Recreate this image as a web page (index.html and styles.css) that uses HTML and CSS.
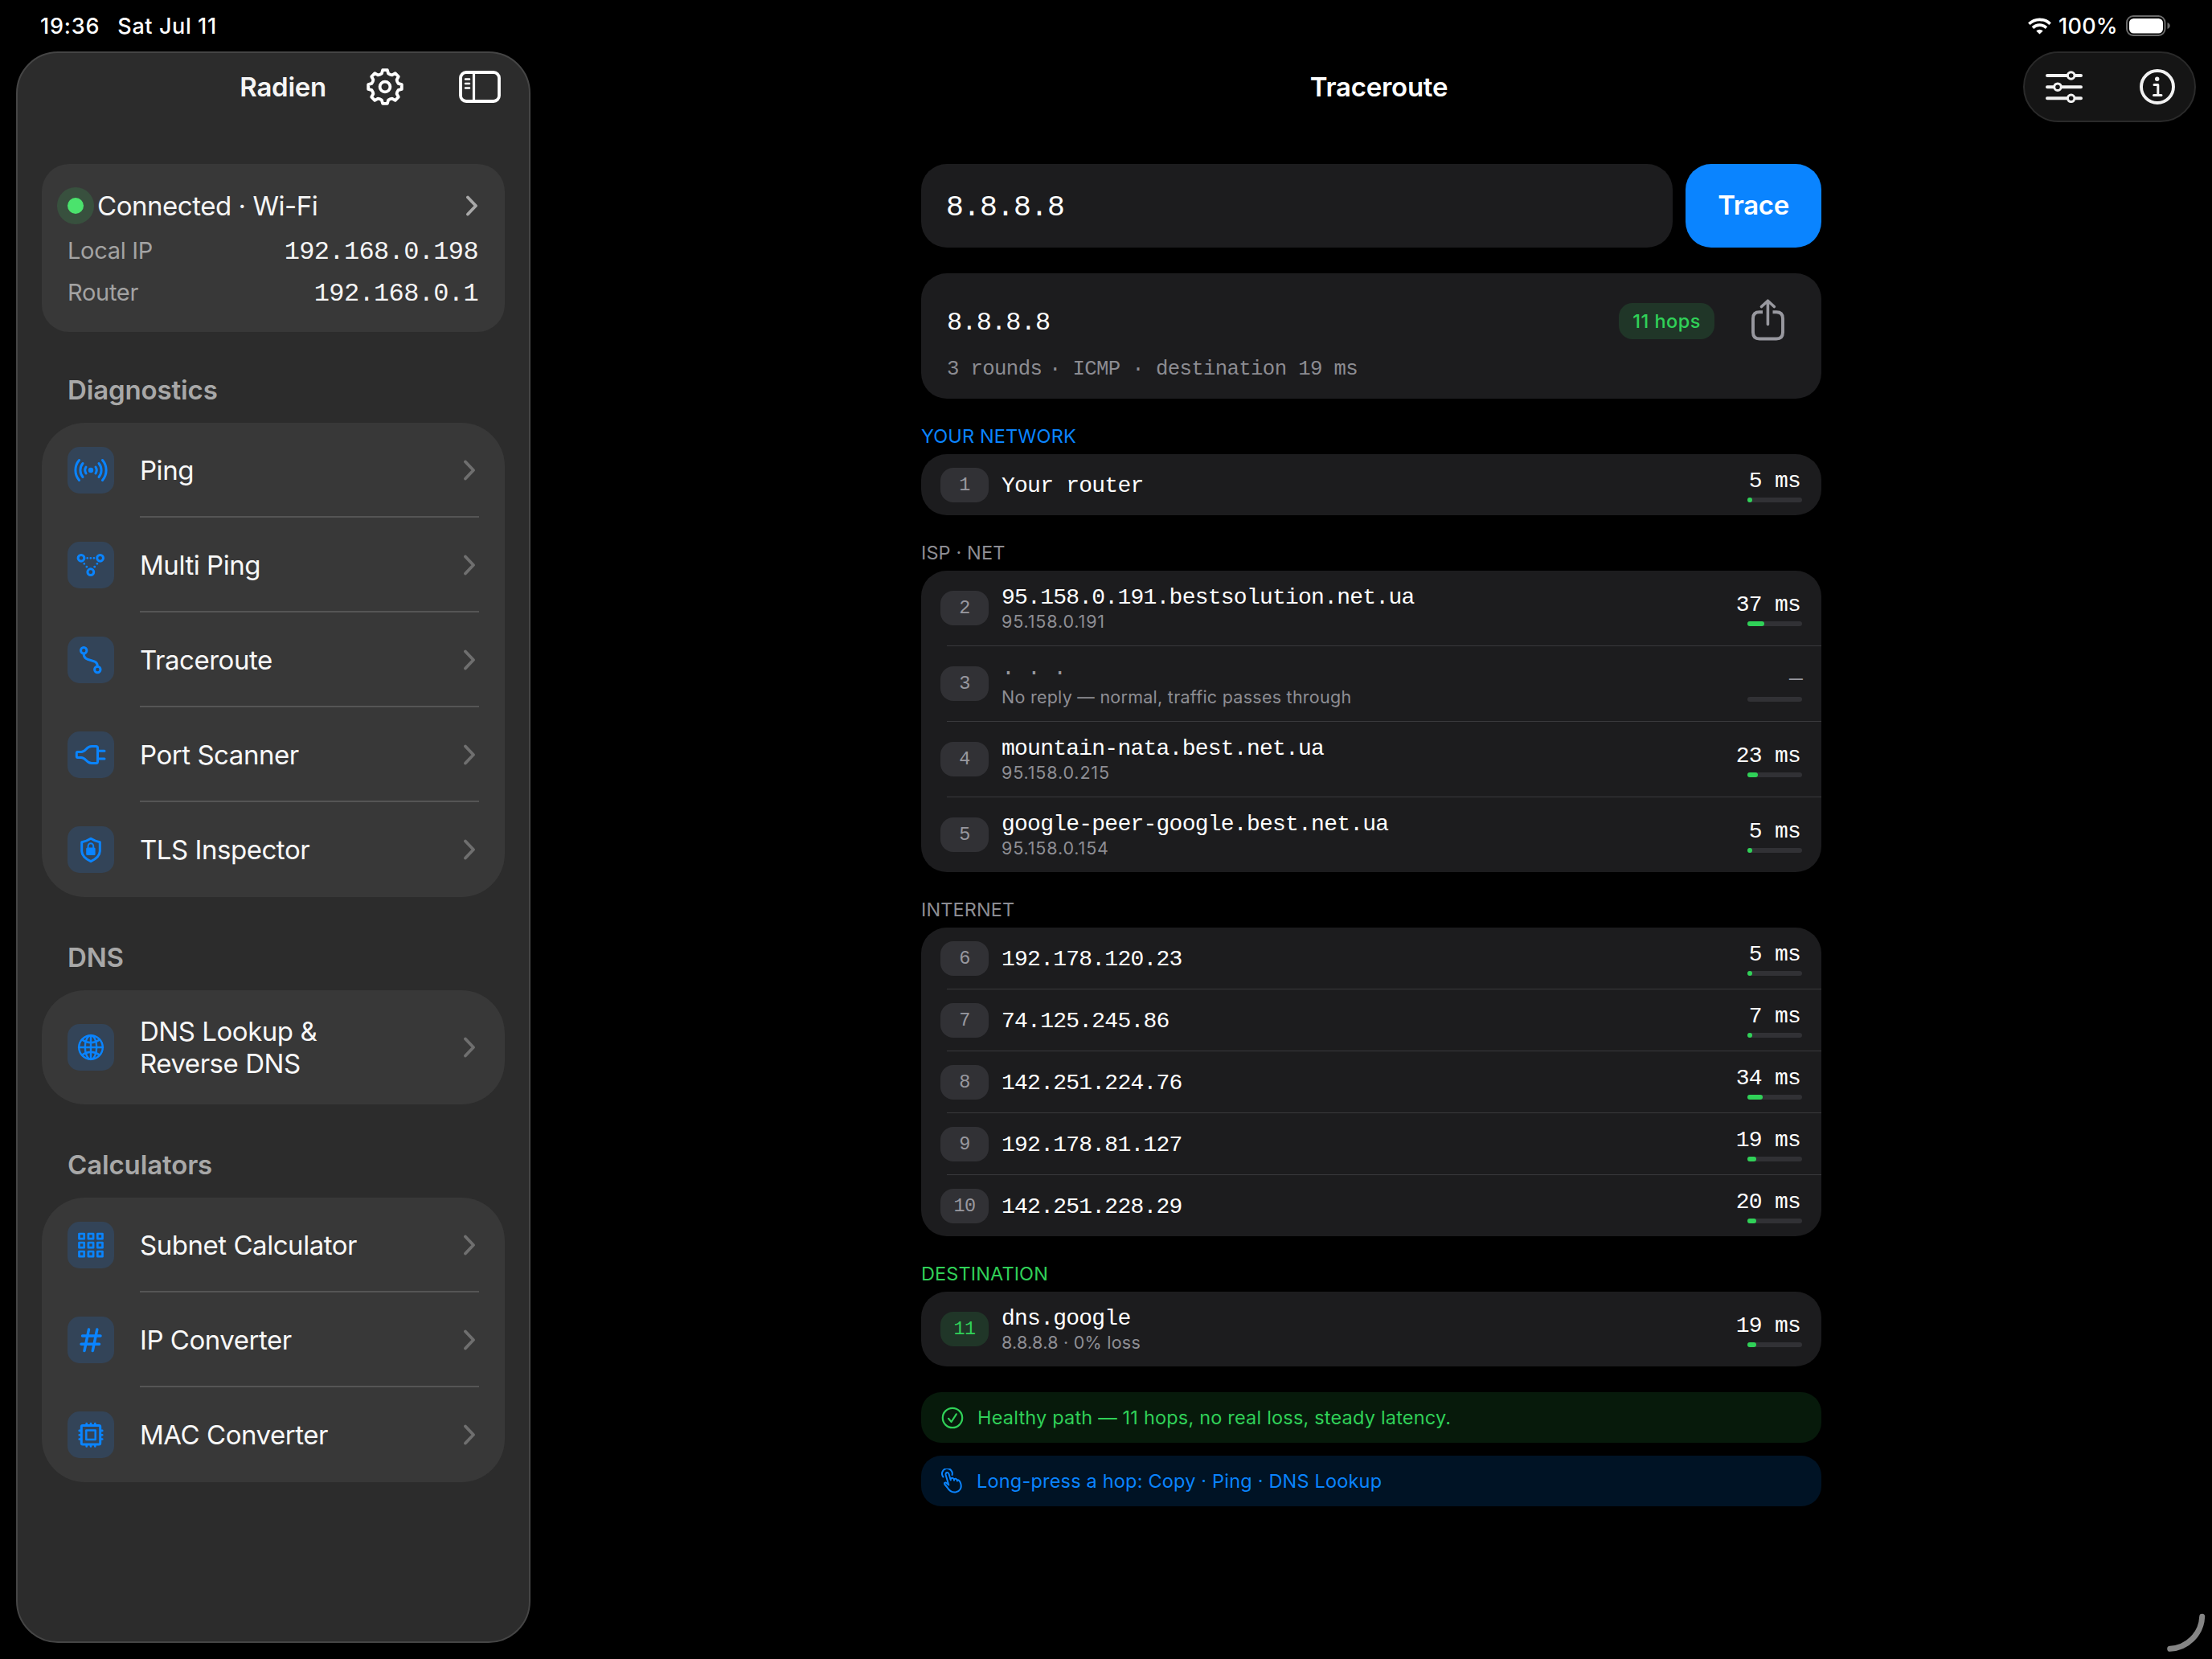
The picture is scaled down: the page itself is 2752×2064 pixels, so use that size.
FILE: index.html
```html
<!DOCTYPE html>
<html lang="en">

<head>
  <meta charset="UTF-8">
  <meta name="viewport" content="width=device-width, initial-scale=1.0">
  <title>Radien - Traceroute</title>
  <link rel="stylesheet" href="styles.css">
</head>

<body>
  <svg class="sprite">
    <symbol id="chevron" viewBox="0 0 16 26">
      <path d="M3 2.5 L13 13 L3 23.5" fill="none" stroke="currentColor" stroke-width="3.8" stroke-linecap="round" stroke-linejoin="round" />
    </symbol>
  </svg>

  <div class="statusbar">
    <span class="time">19:36</span>
    <span class="date">Sat Jul 11</span>
    <svg class="wifi" width="29" height="21" viewBox="0 0 29 21" fill="none" stroke="#fff" stroke-width="3.7">
      <path d="M1.4 7.8 A18.4 18.4 0 0 1 27.6 7.8" />
      <path d="M6 12.6 A12 12 0 0 1 23 12.6" />
      <path d="M14.5 20.6 L10.3 16.5 A6 6 0 0 1 18.7 16.5Z" fill="#fff" stroke="none" />
    </svg>
    <span class="percent">100%</span>
    <svg class="battery" width="56" height="26" viewBox="0 0 56 26">
      <rect x="1" y="1" width="47.5" height="24" rx="8" fill="none" stroke="#6a6a6a" stroke-width="2" />
      <rect x="4" y="4" width="42" height="18.5" rx="5.5" fill="#fff" />
      <path d="M51.5 9 Q54.8 10.5 54.8 13 Q54.8 15.5 51.5 17Z" fill="#6a6a6a" />
    </svg>
  </div>

  <div class="app">
    <aside class="sidebar">
      <header class="sidebar-header">
        <h1>Radien</h1>
        <svg class="gear" width="48" height="48" viewBox="-24 -24 48 48" fill="none" stroke="#fff" stroke-width="3.8" stroke-linejoin="round">
          <path d="M-2.9 -20.8 H2.9 L4.1 -16.5 Q6.2 -14.9 8.8 -14.6 L12.7 -16.8 L16.8 -12.7 L14.6 -8.8 Q14.9 -6.2 16.5 -4.1 L20.8 -2.9 V2.9 L16.5 4.1 Q14.9 6.2 14.6 8.8 L16.8 12.7 L12.7 16.8 L8.8 14.6 Q6.2 14.9 4.1 16.5 L2.9 20.8 H-2.9 L-4.1 16.5 Q-6.2 14.9 -8.8 14.6 L-12.7 16.8 L-16.8 12.7 L-14.6 8.8 Q-14.9 6.2 -16.5 4.1 L-20.8 2.9 V-2.9 L-16.5 -4.1 Q-14.9 -6.2 -14.6 -8.8 L-16.8 -12.7 L-12.7 -16.8 L-8.8 -14.6 Q-6.2 -14.9 -4.1 -16.5Z" />
          <circle r="6.4" />
        </svg>
        <svg width="52" height="40" viewBox="0 0 52 40" fill="none" stroke="#fff" stroke-width="3.8">
          <rect x="2" y="2" width="48" height="36" rx="7" />
          <path d="M18.5 2 V38" stroke-width="3.2" />
          <path d="M8 10.5 H13 M8 16 H13 M8 21.5 H13" stroke-width="2.6" stroke-linecap="round" />
        </svg>
      </header>

      <section class="status-card">
        <div class="status-title">
          <span class="dot"></span>
          <span>Connected · Wi-Fi</span>
          <svg class="chevron" width="16" height="26"><use href="#chevron" /></svg>
        </div>
        <div class="status-row"><span>Local IP</span><span class="mono">192.168.0.198</span></div>
        <div class="status-row"><span>Router</span><span class="mono">192.168.0.1</span></div>
      </section>

      <h2>Diagnostics</h2>
      <nav class="group">
        <div class="tool">
          <svg class="tool-icon" viewBox="0 0 58 58">
            <circle cx="29" cy="29" r="3.2" fill="#0a84ff" stroke="none" />
            <path d="M14.5 16.5 A19.3 19.3 0 0 0 14.5 41.5 M19 20.5 A13.3 13.3 0 0 0 19 37.5 M23 25 A7.6 7.6 0 0 0 23 33 M43.5 16.5 A19.3 19.3 0 0 1 43.5 41.5 M39 20.5 A13.3 13.3 0 0 1 39 37.5 M35 25 A7.6 7.6 0 0 1 35 33" />
          </svg>
          <div class="tool-row"><span>Ping</span><svg class="chevron" width="16" height="26"><use href="#chevron" /></svg></div>
        </div>
        <div class="tool">
          <svg class="tool-icon" viewBox="0 0 58 58">
            <circle cx="17" cy="20.3" r="3.9" />
            <circle cx="40.6" cy="20.3" r="3.9" />
            <circle cx="28.8" cy="37.7" r="3.9" />
            <path d="M24.7 20.3 h0 M28.8 20.3 h0 M32.9 20.3 h0 M20.8 27.3 h0 M23.9 31.2 h0 M36.9 27.3 h0 M33.7 31.2 h0" stroke-width="2.8" />
          </svg>
          <div class="tool-row"><span>Multi Ping</span><svg class="chevron" width="16" height="26"><use href="#chevron" /></svg></div>
        </div>
        <div class="tool">
          <svg class="tool-icon" viewBox="0 0 58 58">
            <circle cx="20.2" cy="17.3" r="3.7" />
            <circle cx="37.3" cy="41" r="3.7" />
            <path d="M20.2 21.5 C20.2 33 37.3 26 37.3 37" />
          </svg>
          <div class="tool-row"><span>Traceroute</span><svg class="chevron" width="16" height="26"><use href="#chevron" /></svg></div>
        </div>
        <div class="tool">
          <svg class="tool-icon" viewBox="0 0 58 58">
            <path d="M12.5 25.5 H17 C23 25.5 23 18.5 30 18.5 H35.5 Q37.5 18.5 37.5 20.5 V37.5 Q37.5 39.5 35.5 39.5 H30 C23 39.5 23 32.5 17 32.5 H12.5 Q11.3 32.5 11.3 31 V27 Q11.3 25.5 12.5 25.5Z M38 24.2 H46 M38 34 H46" />
          </svg>
          <div class="tool-row"><span>Port Scanner</span><svg class="chevron" width="16" height="26"><use href="#chevron" /></svg></div>
        </div>
        <div class="tool">
          <svg class="tool-icon" viewBox="0 0 58 58">
            <path d="M29 15.3 Q34 18.5 40.3 19.8 V31 Q40 38.5 29 43.7 Q18 38.5 17.7 31 V19.8 Q24 18.5 29 15.3Z" />
            <rect x="23.2" y="26.5" width="11.4" height="9.5" rx="1.5" fill="#0a84ff" stroke="none" />
            <path d="M25.6 27 V24.5 A3.3 3.3 0 0 1 32.2 24.5 V27" stroke-width="2" />
          </svg>
          <div class="tool-row"><span>TLS Inspector</span><svg class="chevron" width="16" height="26"><use href="#chevron" /></svg></div>
        </div>
      </nav>

      <h2>DNS</h2>
      <nav class="group">
        <div class="tool tall">
          <svg class="tool-icon thin" viewBox="0 0 58 58">
            <circle cx="29" cy="29" r="14.8" />
            <ellipse cx="29" cy="29" rx="7.2" ry="14.8" />
            <path d="M29 14 V44 M14 29 H44 M18 19.5 Q29 27 40 19.5 M18 38.5 Q29 31 40 38.5" />
          </svg>
          <div class="tool-row"><span>DNS Lookup &amp;<br>Reverse DNS</span><svg class="chevron" width="16" height="26"><use href="#chevron" /></svg></div>
        </div>
      </nav>

      <h2>Calculators</h2>
      <nav class="group">
        <div class="tool">
          <svg class="tool-icon" viewBox="0 0 58 58">
            <path d="M14.5 15 h6.2 v6.2 h-6.2Z M25.9 15 h6.2 v6.2 h-6.2Z M37.3 15 h6.2 v6.2 h-6.2Z M14.5 26 h6.2 v6.2 h-6.2Z M25.9 26 h6.2 v6.2 h-6.2Z M37.3 26 h6.2 v6.2 h-6.2Z M14.5 37 h6.2 v6.2 h-6.2Z M25.9 37 h6.2 v6.2 h-6.2Z M37.3 37 h6.2 v6.2 h-6.2Z" stroke-width="2.7" />
          </svg>
          <div class="tool-row"><span>Subnet Calculator</span><svg class="chevron" width="16" height="26"><use href="#chevron" /></svg></div>
        </div>
        <div class="tool">
          <svg class="tool-icon" viewBox="0 0 58 58">
            <path d="M26.5 16 L21 42.5 M36.8 16 L31.3 42.5 M18.5 23.9 H41 M17 34.3 H39.5" stroke-width="3.5" />
          </svg>
          <div class="tool-row"><span>IP Converter</span><svg class="chevron" width="16" height="26"><use href="#chevron" /></svg></div>
        </div>
        <div class="tool">
          <svg class="tool-icon" viewBox="0 0 58 58">
            <rect x="17.3" y="17.5" width="23.4" height="23.4" rx="1.5" />
            <rect x="23.3" y="23.5" width="11.4" height="11.4" stroke-width="2.5" />
            <path d="M23.7 15 V17 M29 15 V17 M34.3 15 V17 M23.7 41.5 V43.5 M29 41.5 V43.5 M34.3 41.5 V43.5 M14.7 23.9 H17 M14.7 29.2 H17 M14.7 34.5 H17 M41.2 23.9 H43.3 M41.2 29.2 H43.3 M41.2 34.5 H43.3" stroke-width="2.6" />
          </svg>
          <div class="tool-row"><span>MAC Converter</span><svg class="chevron" width="16" height="26"><use href="#chevron" /></svg></div>
        </div>
      </nav>
    </aside>

    <main class="main">
      <header class="main-header">
        <h1>Traceroute</h1>
        <div class="toolbar">
          <svg width="46" height="40" viewBox="0 0 46 40" fill="#151515" stroke="#f2f2f2" stroke-width="4" stroke-linecap="round">
            <path d="M2 6 H44 M2 20.2 H44 M2 34.3 H44" />
            <circle cx="31.7" cy="6" r="4.3" stroke-width="3" />
            <circle cx="15" cy="20.2" r="4.3" stroke-width="3" />
            <circle cx="31.7" cy="34.3" r="4.3" stroke-width="3" />
          </svg>
          <svg width="44" height="44" viewBox="0 0 44 44" fill="none" stroke="#f2f2f2" stroke-width="3.9">
            <circle cx="22" cy="22" r="20" />
            <circle cx="21.7" cy="12.3" r="2.7" fill="#f2f2f2" stroke="none" />
            <path d="M18 19.5 H22.8 V32 M17.5 32.5 H27" stroke-width="3" stroke-linecap="round" stroke-linejoin="round" />
          </svg>
        </div>
      </header>

      <div class="content">
        <div class="target">
          <div class="target-input mono">8.8.8.8</div>
          <button class="trace-btn">Trace</button>
        </div>

        <section class="card summary">
          <div class="summary-top">
            <span class="summary-host mono">8.8.8.8</span>
            <span class="hops">11 hops</span>
            <svg width="42" height="52" viewBox="0 0 42 52" fill="none" stroke="#98989f" stroke-width="3.9">
              <path d="M14 16.3 H10 Q2 16.3 2 24.3 V41.5 Q2 49.5 10 49.5 H31 Q39 49.5 39 41.5 V24.3 Q39 16.3 31 16.3 H26.5" />
              <path d="M20.4 2.5 V31.5 M12.5 9.5 L20.4 2.2 L28.3 9.5" stroke-width="3.6" stroke-linecap="round" stroke-linejoin="round" />
            </svg>
          </div>
          <p class="summary-meta mono">3 rounds<span class="tight"> ·</span> ICMP · destination 19 ms</p>
        </section>

        <h3 class="blue">YOUR NETWORK</h3>
        <section class="card">
          <div class="hop">
            <span class="num mono">1</span>
            <div class="host"><span class="name mono">Your router</span></div>
            <div class="latency mono"><span>5 ms</span><div class="bar"><i style="width: 4.2%"></i></div></div>
          </div>
        </section>

        <h3>ISP · NET</h3>
        <section class="card">
          <div class="hop two">
            <span class="num mono">2</span>
            <div class="host"><span class="name mono">95.158.0.191.bestsolution.net.ua</span><span class="sub ip">95.158.0.191</span></div>
            <div class="latency mono"><span>37 ms</span><div class="bar"><i style="width: 30.8%"></i></div></div>
          </div>
          <hr>
          <div class="hop two">
            <span class="num mono">3</span>
            <div class="host muted"><span class="name mono">· · ·</span><span class="sub">No reply — normal, traffic passes through</span></div>
            <div class="latency mono muted"><span>—</span><div class="bar"></div></div>
          </div>
          <hr>
          <div class="hop two">
            <span class="num mono">4</span>
            <div class="host"><span class="name mono">mountain-nata.best.net.ua</span><span class="sub ip">95.158.0.215</span></div>
            <div class="latency mono"><span>23 ms</span><div class="bar"><i style="width: 19.2%"></i></div></div>
          </div>
          <hr>
          <div class="hop two">
            <span class="num mono">5</span>
            <div class="host"><span class="name mono">google-peer-google.best.net.ua</span><span class="sub ip">95.158.0.154</span></div>
            <div class="latency mono"><span>5 ms</span><div class="bar"><i style="width: 4.2%"></i></div></div>
          </div>
        </section>

        <h3>INTERNET</h3>
        <section class="card">
          <div class="hop">
            <span class="num mono">6</span>
            <div class="host"><span class="name mono">192.178.120.23</span></div>
            <div class="latency mono"><span>5 ms</span><div class="bar"><i style="width: 4.2%"></i></div></div>
          </div>
          <hr>
          <div class="hop">
            <span class="num mono">7</span>
            <div class="host"><span class="name mono">74.125.245.86</span></div>
            <div class="latency mono"><span>7 ms</span><div class="bar"><i style="width: 5.8%"></i></div></div>
          </div>
          <hr>
          <div class="hop">
            <span class="num mono">8</span>
            <div class="host"><span class="name mono">142.251.224.76</span></div>
            <div class="latency mono"><span>34 ms</span><div class="bar"><i style="width: 28.3%"></i></div></div>
          </div>
          <hr>
          <div class="hop">
            <span class="num mono">9</span>
            <div class="host"><span class="name mono">192.178.81.127</span></div>
            <div class="latency mono"><span>19 ms</span><div class="bar"><i style="width: 15.8%"></i></div></div>
          </div>
          <hr>
          <div class="hop">
            <span class="num mono">10</span>
            <div class="host"><span class="name mono">142.251.228.29</span></div>
            <div class="latency mono"><span>20 ms</span><div class="bar"><i style="width: 16.7%"></i></div></div>
          </div>
        </section>

        <h3 class="green">DESTINATION</h3>
        <section class="card">
          <div class="hop two">
            <span class="num mono last">11</span>
            <div class="host"><span class="name mono">dns.google</span><span class="sub">8.8.8.8 · 0% loss</span></div>
            <div class="latency mono"><span>19 ms</span><div class="bar"><i style="width: 15.8%"></i></div></div>
          </div>
        </section>

        <div class="note note-ok">
          <svg width="28" height="28" viewBox="0 0 28 28" fill="none" stroke="currentColor" stroke-width="2.2" stroke-linecap="round" stroke-linejoin="round">
            <circle cx="14" cy="14" r="12.2" />
            <path d="M9 14.8 L12.6 19 L18.8 9.3" />
          </svg>
          <span>Healthy path — 11 hops, no real loss, steady latency.</span>
        </div>
        <div class="note note-tip">
          <svg width="27" height="31" viewBox="0 0 27 31" fill="none" stroke="currentColor" stroke-width="2" stroke-linecap="round" stroke-linejoin="round">
            <path d="M2.5 10.5 A6.4 6.4 0 1 1 13.6 8" />
            <path d="M9.3 20.5 L5.6 8 Q5.2 5.5 7 5 Q8.9 4.6 9.6 7 L11.8 14.5 V12.6 Q14.3 10.7 15.7 13.3 L16 14.8 M15.7 13.3 Q18.3 11.7 19.6 14.3 L19.9 15.6 M19.6 14.3 Q22.5 13.5 24.2 18.5 C26 24.5 23 28.3 18.5 29.3 C13 30.3 9.8 27.5 7.5 23.5 L4.2 19.5 Q3.5 17.3 5.8 17.5 L9.3 20.5" />
          </svg>
          <span>Long-press a hop: Copy · Ping · DNS Lookup</span>
        </div>
      </div>
    </main>
  </div>

  <!-- window resize handle -->
  <svg class="resize" width="52" height="52" viewBox="0 0 52 52" fill="none" stroke="#858585" stroke-width="7" stroke-linecap="round">
    <path d="M45.7 5.3 A42 42 0 0 1 5.7 45.3" />
  </svg>
</body>

</html>
```

FILE: styles.css
```css
* {
  box-sizing: border-box;
}

body {
  margin: 0;
  height: 2064px;
  background-color: #000;
  color: #fff;
  font-family: Inter, "Liberation Sans", sans-serif;
  overflow: hidden;
}

h1,
h2,
h3,
p {
  margin: 0;
}

.sprite {
  display: none;
}

.mono {
  font-family: "Liberation Mono", monospace;
  letter-spacing: -0.027em;
}

/* status bar */
.statusbar {
  display: flex;
  align-items: center;
  height: 64px;
  padding: 0 51px 0 50px;
  font-size: 27px;
  font-weight: 500;
}

.time {
  letter-spacing: 0.8px;
}

.date {
  margin-left: 22px;
  letter-spacing: 0.6px;
}

.wifi {
  margin-left: auto;
}

.percent {
  margin: 0 10px 0 9px;
  letter-spacing: 0.3px;
}

.app {
  display: flex;
  height: 1980px;
  padding-left: 20px;
}

/* sidebar */
.sidebar {
  width: 640px;
  padding: 0 30px;
  background-color: #2c2c2c;
  border: 2px solid #454545;
  border-radius: 52px;
}

.sidebar-header {
  display: flex;
  align-items: center;
  justify-content: flex-end;
  height: 84px;
  padding-right: 5px;
  margin-bottom: 54px;
}

.sidebar-header .gear {
  margin: 0 68px 0 49px;
}

h1 {
  font-size: 33px;
  font-weight: 600;
  line-height: 40px;
  letter-spacing: -0.008em;
}

.sidebar h1 {
  color: #f5f5f5;
}

.status-card {
  height: 209px;
  padding: 30px 32px 0;
  background-color: #383838;
  border-radius: 34px;
}

.status-title {
  display: flex;
  align-items: center;
  height: 44px;
  margin-bottom: 8px;
  color: #f5f5f5;
  font-size: 33px;
  letter-spacing: -0.014em;
}

.dot {
  width: 20px;
  height: 20px;
  margin-right: 17px;
  border-radius: 50%;
  background-color: #4be36d;
  box-shadow: 0 0 0 13px #38503e;
}

.chevron {
  margin-left: auto;
}

.status-title .chevron {
  margin-right: 1px;
  color: #a8a8a8;
}

.status-row {
  display: flex;
  align-items: baseline;
  justify-content: space-between;
  height: 52px;
  padding-right: 1px;
  line-height: 52px;
  font-size: 29px;
  letter-spacing: -0.01em;
  color: #a3a3a3;
}

.status-row .mono {
  font-size: 32px;
  letter-spacing: -0.02em;
  color: #f5f5f5;
}

h2 {
  margin: 55px 0 21px 32px;
  color: #a8a8a8;
  font-size: 33px;
  font-weight: 600;
  line-height: 40px;
  letter-spacing: -0.004em;
}

.status-card + h2 {
  margin-top: 52px;
}

.group {
  background-color: #383838;
  border-radius: 54px;
}

.tool {
  display: flex;
  align-items: center;
  height: 118px;
  padding: 0 32px;
}

.tool.tall {
  height: 142px;
}

.tool-icon {
  width: 58px;
  height: 58px;
  margin-right: 32px;
  border-radius: 15px;
  background-color: #334458;
  fill: none;
  stroke: #0a84ff;
  stroke-width: 3;
  stroke-linecap: round;
  stroke-linejoin: round;
}

.tool-icon.thin {
  stroke-width: 2.4;
}

.tool-row {
  display: flex;
  flex: 1;
  align-items: center;
  height: 100%;
  padding: 2px 4px 0 0;
  border-bottom: 2px solid #555;
  color: #f8f8f8;
  font-size: 33px;
  line-height: 40px;
  letter-spacing: -0.014em;
}

.tool:last-child .tool-row {
  border-bottom-color: transparent;
}

.tool-row .chevron {
  color: #6f6f6f;
}

/* main area */
.main {
  flex: 1;
}

.main-header {
  display: grid;
  grid-template-columns: 1fr auto 1fr;
  align-items: center;
  height: 88px;
  padding: 0 20px 0 39px;
}

.main-header h1 {
  grid-column: 2;
}

.toolbar {
  display: flex;
  align-items: center;
  justify-content: space-between;
  justify-self: end;
  width: 215px;
  height: 88px;
  padding: 0 24px 0 26px;
  background-color: #151515;
  border: 2px solid #2a2a2a;
  border-radius: 44px;
}

.content {
  width: 1120px;
  margin: 52px auto 0;
}

.target {
  display: flex;
  gap: 16px;
  margin-bottom: 32px;
}

.target-input {
  flex: 1;
  height: 104px;
  padding: 3px 31px 0;
  background-color: #1c1c1e;
  border-radius: 32px;
  font-size: 36.5px;
  letter-spacing: -0.025em;
  line-height: 104px;
}

.trace-btn {
  width: 169px;
  padding: 0 0 2px;
  border: none;
  border-radius: 32px;
  background-color: #0a84ff;
  color: #fff;
  font-family: inherit;
  font-size: 33px;
  font-weight: 600;
  letter-spacing: -0.01em;
}

.card {
  background-color: #1c1c1e;
  border-radius: 32px;
  overflow: hidden;
}

.summary {
  height: 156px;
  padding: 31px 45px 0 32px;
}

.summary-top {
  display: flex;
  align-items: center;
  height: 54px;
}

.summary-host {
  flex: 1;
  padding-top: 7px;
  font-size: 32px;
}

.hops {
  width: 119px;
  margin: 3px 46px 0 0;
  border-radius: 17px;
  background-color: #203628;
  color: #30d158;
  font-size: 23.5px;
  font-weight: 500;
  letter-spacing: 0.02em;
  line-height: 45px;
  text-align: center;
}

.summary-meta {
  margin-top: 17px;
  color: #8c8c92;
  font-size: 25.7px;
  letter-spacing: -0.025em;
  line-height: 36px;
  white-space: pre;
}

.tight {
  word-spacing: -6px;
}

h3 {
  margin: 30px 0 6px;
  color: #8d8d93;
  font-size: 23.5px;
  font-weight: 400;
  letter-spacing: 0.005em;
  line-height: 33px;
}

h3.blue {
  color: #0a84ff;
}

h3.green {
  color: #30d158;
}

.hop {
  display: flex;
  align-items: center;
  height: 76px;
  padding: 0 24px;
}

.hop.two {
  height: 93px;
}

hr {
  height: 1px;
  margin: 0 0 0 32px;
  border: none;
  background-color: #39393c;
}

.num {
  width: 60px;
  margin-right: 16px;
  border-radius: 16px;
  background-color: #313135;
  color: #98989f;
  font-size: 23.5px;
  line-height: 43px;
  text-align: center;
}

.num.last {
  background-color: #203628;
  color: #30d158;
}

.host {
  display: flex;
  flex: 1;
  flex-direction: column;
}

.hop.two .host {
  padding-top: 2px;
}

.name {
  font-size: 28px;
  line-height: 32px;
  white-space: pre;
}

.name:only-child {
  padding-top: 3px;
}

.sub {
  color: #8e8e94;
  font-size: 21.5px;
  letter-spacing: 0.012em;
  line-height: 27px;
}

.sub.ip {
  letter-spacing: 0.04em;
}

.latency {
  display: flex;
  flex-direction: column;
  align-items: flex-end;
  font-size: 28px;
  line-height: 36px;
}

.latency span {
  padding-right: 2px;
}

.muted {
  color: #98989f;
}

.bar {
  width: 68px;
  height: 6px;
  margin-top: 2px;
  border-radius: 3px;
  background-color: #313135;
}

.bar i {
  display: block;
  min-width: 6px;
  height: 6px;
  border-radius: 3px;
  background-color: #30d158;
}

.latency.muted {
  line-height: 32px;
}

.latency.muted span {
  padding-right: 0;
}

.latency.muted .bar {
  margin-top: 6px;
}

.note {
  display: flex;
  align-items: center;
  height: 63px;
  margin-top: 16px;
  padding: 0 25px;
  border-radius: 25px;
  font-size: 23.5px;
  letter-spacing: 0.008em;
}

.note span {
  margin-left: 17px;
}

.note-ok {
  margin-top: 32px;
  background-color: #071a0b;
  color: #30d158;
}

.note-tip {
  background-color: #001325;
  color: #0a84ff;
}

.resize {
  position: absolute;
  right: 6px;
  bottom: 6px;
}
```
